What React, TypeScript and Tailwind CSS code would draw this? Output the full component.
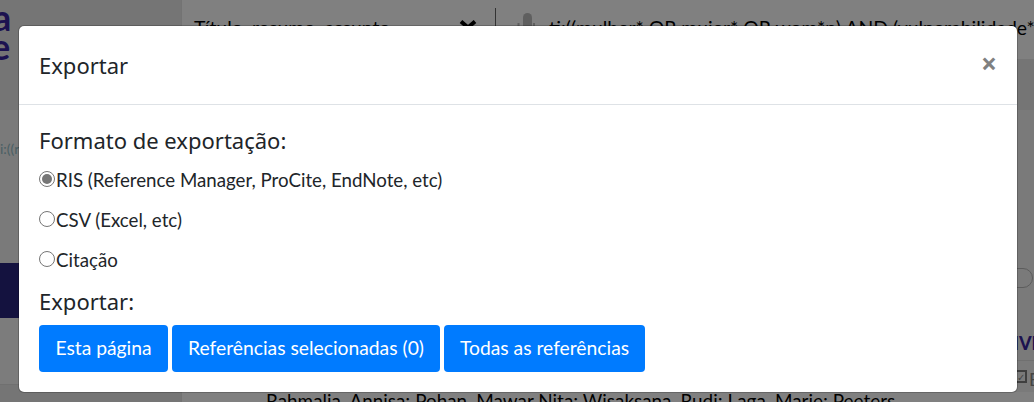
import React from "react";

const body = { fontFamily: 'Lato, sans-serif' };
const head = { fontFamily: '"Noto Sans", sans-serif' };

function Radio({ label, checked }: { label: string; checked?: boolean }) {
  return (
    <label className="flex h-[40px] items-center text-[18.7px] leading-[24px] text-[#212529]">
      <span className="mb-[2px] flex h-[16px] w-[16px] shrink-0 items-center justify-center rounded-full border border-[#767676] bg-white">
        {checked && <span className="h-[10px] w-[10px] rounded-full bg-[#767676]" />}
      </span>
      <span className="ml-[1px]">{label}</span>
    </label>
  );
}

export default function App() {
  return (
    <div className="relative h-[402px] w-[1034px] overflow-hidden bg-[#808080]" style={body}>
      <div className="flex h-full">
        <aside className="flex w-[182px] shrink-0 flex-col border-r border-[#737373] bg-[#757575]">
          <div className="h-[110px] overflow-hidden bg-[#757575] pt-[1px] text-[36px] font-bold leading-[29px] text-[#1c1250]">
            <div className="-ml-[7px] pt-[2px]">a</div>
            <div className="-ml-[9px]">e</div>
          </div>
          <div className="h-[153px] bg-[#7a7a7a] pt-[30px] text-[14px] leading-[18px] text-[#4a5f64]">
            <span>i:((r</span>
          </div>
          <div className="h-[55px] bg-[#14123f]" />
          <div className="h-[67px] border-b border-[#707070] bg-[#7c7c7c]" />
          <div className="grow bg-[#757575]" />
        </aside>
        <main className="flex min-w-0 grow flex-col">
          <div className="flex h-[59px] shrink-0 items-start whitespace-nowrap bg-[#808080] pl-[12px] pt-[16px] text-[19.4px] leading-[24px] text-black">
            <span className="w-[265px] shrink-0">Título, resumo, assunto</span>
            <svg className="mt-[4px] shrink-0" width="18" height="10" viewBox="0 0 18 10">
              <path d="M2 1.5 L9 7.5 L16 1.5" fill="none" stroke="#000" strokeWidth="4" />
            </svg>
            <span className="ml-[18px] mt-[-8px] h-[24px] w-[1px] shrink-0 bg-[#333333]" />
            <svg className="ml-[21px] mt-[-3px] shrink-0" width="18" height="26" viewBox="0 0 18 26">
              <rect x="6" y="0" width="9" height="18" rx="4.5" fill="#5f5f5f" />
              <path d="M1.5 10 V13 A7.5 7.5 0 0 0 17 13 V10" fill="none" stroke="#5f5f5f" strokeWidth="2" />
            </svg>
            <span className="ml-[14px]">ti:((mulher* OR mujer* OR wom*n) AND (vulnerabilidade* (</span>
          </div>
          <div className="flex h-[51px] shrink-0 bg-[#757575]" />
          <div className="flex h-[250px] shrink-0 flex-col items-end bg-[#7a7a7a]">
            <div className="mr-[1px] mt-[158px] h-[20px] w-[32px] shrink-0 rounded-full border border-[#5c5c5c]" />
            <div className="mr-[-3px] mt-[43px] whitespace-nowrap text-[18px] font-black leading-[24px] text-[#1c1250]">IVI</div>
          </div>
          <div className="flex h-[32px] shrink-0 justify-end border-t border-[#707070] bg-[#7a7a7a] pt-[9px] text-[18px] leading-[18px] text-[#444444]">
            <span className="mr-[2px] flex h-[13px] w-[13px] shrink-0 items-center justify-center border-2 border-[#3f3f3f] text-[10px] leading-none">✓</span>
            <span className="w-[5px] overflow-hidden">E</span>
          </div>
          <div className="ml-[7px] mr-[35px] h-[10px] shrink-0 whitespace-nowrap bg-[#808080] pl-[77px] text-[18.9px] leading-[24px] text-black">
            <span className="relative top-[-3px]">Rahmalia, Annisa; Pohan, Mawar Nita; Wisaksana, Rudi; Laga, Marie; Peeters</span>
          </div>
        </main>
      </div>

      <div className="absolute left-[18px] top-[25px] w-[1000px] overflow-hidden rounded-[6px] border border-black/20 bg-white bg-clip-padding">
        <header className="flex h-[79px] items-center justify-between border-b border-[#dee2e6] px-[20px] pb-[1px]" style={head}>
          <h5 className="text-[22px] font-normal leading-[30px] text-[#212529]">Exportar</h5>
          <span className="mb-[4px] text-[28px] font-bold leading-none text-[#808080]">×</span>
        </header>
        <section className="px-[20px] pb-[20px] pt-[20px]">
          <h5 className="text-[22px] font-normal leading-[30px] text-[#212529]" style={head}>Formato de exportação:</h5>
          <div className="mt-[5px] flex flex-col">
            <Radio label="RIS (Reference Manager, ProCite, EndNote, etc)" checked />
            <Radio label="CSV (Excel, etc)" />
            <Radio label="Citação" />
          </div>
          <h5 className="mt-[6px] text-[22px] font-normal leading-[30px] text-[#212529]" style={head}>Exportar:</h5>
          <div className="mt-[9px] flex gap-[4px]">
            <button className="h-[47px] w-[129px] rounded-[4px] bg-[#007bff] text-[19.3px] text-white">Esta página</button>
            <button className="h-[47px] w-[268px] rounded-[4px] bg-[#007bff] text-[19.3px] text-white">Referências selecionadas (0)</button>
            <button className="h-[47px] w-[201px] rounded-[4px] bg-[#007bff] text-[19.3px] text-white">Todas as referências</button>
          </div>
        </section>
      </div>
    </div>
  );
}
